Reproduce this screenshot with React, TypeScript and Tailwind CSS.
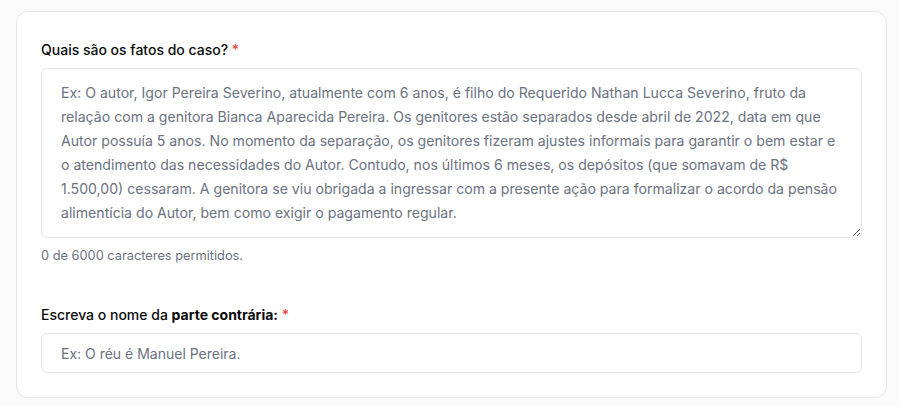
import React from 'react';

const FACTS_PLACEHOLDER =
  'Ex: O autor, Igor Pereira Severino, atualmente com 6 anos, é filho do Requerido Nathan Lucca Severino, fruto da relação com a genitora Bianca Aparecida Pereira. Os genitores estão separados desde abril de 2022, data em que Autor possuía 5 anos. No momento da separação, os genitores fizeram ajustes informais para garantir o bem estar e o atendimento das necessidades do Autor. Contudo, nos últimos 6 meses, os depósitos (que somavam de R$ 1.500,00) cessaram. A genitora se viu obrigada a ingressar com a presente ação para formalizar o acordo da pensão alimentícia do Autor, bem como exigir o pagamento regular.';

export default function App() {
  return (
    <div className="min-h-[406px] bg-[#fafafa] pt-[11px] pl-4 font-['Inter','Noto_Sans',sans-serif]">
      <div className="w-[871px] rounded-xl border border-[#e5e7eb] bg-white px-6 pt-7 pb-6">
        {/* Facts */}
        <label className="block text-sm font-medium leading-5 text-[#0a0a0a]">
          Quais são os fatos do caso? <span className="text-[#ef4444]">*</span>
        </label>
        <textarea
          rows={6}
          placeholder={FACTS_PLACEHOLDER}
          className="mt-2 block h-[170px] w-full overflow-hidden rounded-md border border-[#e5e7eb] bg-white pt-3 pr-[21px] pl-[19px] text-[14.1px] leading-6 text-[#111827] outline-none placeholder:text-[#6b7280]"
        />
        <p className="mt-2 text-[12.8px] leading-5 text-[#6b7280]">0 de 6000 caracteres permitidos.</p>

        {/* Opposing party */}
        <label className="mt-[39px] block text-sm font-medium leading-5 text-[#0a0a0a]">
          Escreva o nome da <span className="font-bold">parte contrária:</span>{' '}
          <span className="text-[#ef4444]">*</span>
        </label>
        <input
          type="text"
          placeholder="Ex: O réu é Manuel Pereira."
          className="mt-2 block h-10 w-full rounded-md border border-[#e5e7eb] bg-white px-[19px] text-sm text-[#111827] outline-none placeholder:text-[#6b7280]"
        />
      </div>
    </div>
  );
}
